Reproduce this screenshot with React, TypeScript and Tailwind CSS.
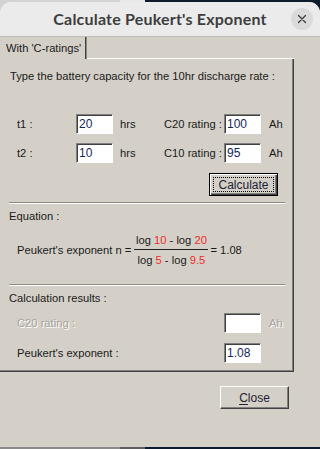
import React from 'react';

const font = { fontFamily: '"Liberation Sans", Arial, sans-serif' };

function Field({ value, disabled }: { value?: string; disabled?: boolean }) {
  return (
    <div className="w-[37px] h-[20px] shrink-0 bg-white border border-t-[#808080] border-l-[#808080] border-r-white border-b-white shadow-[inset_1px_1px_0_#404040] flex items-center pl-[2px] text-[12px] text-[#14285a]">
      {!disabled && value}
    </div>
  );
}

function Separator() {
  return <div className="ml-[9px] mr-[8px] h-[2px] border-t border-[#8c8a85] border-b border-b-white" />;
}

export default function App() {
  return (
    <div
      className="w-[320px] h-[449px] flex flex-col overflow-hidden whitespace-nowrap bg-[linear-gradient(to_right,#d3d3d3_120px,#e8e8e8_120px,#e8e8e8_145px,#0d1b2e_145px)]"
      style={font}
    >
      <div className="h-[2px] shrink-0" />
      <div className="flex-1 flex flex-col bg-[#d4d0c8] rounded-t-[11px] overflow-hidden">
        {/* title bar */}
        <div className="h-[35px] shrink-0 bg-[#ebebeb] border-b border-[#bdbdbd] grid grid-cols-[1fr_auto_1fr] items-center">
          <div />
          <div className="text-[16px] font-bold text-[#3d3d3d] tracking-[0.2px]" style={{ fontFamily: 'Lato, "Open Sans", sans-serif' }}>
            Calculate Peukert's Exponent
          </div>
          <div className="flex justify-end pr-[7px]">
            <div className="w-[22px] h-[22px] rounded-full bg-[#dadada] flex items-center justify-center">
              <svg width="10" height="10" viewBox="0 0 10 10">
                <path d="M1.5 1.5 L8.5 8.5 M8.5 1.5 L1.5 8.5" stroke="#3a3a3a" strokeWidth="1.3" strokeLinecap="round" />
              </svg>
            </div>
          </div>
        </div>

        {/* tab */}
        <div className="h-[22px] shrink-0 flex w-[294px]">
          <div className="w-[86px] pl-[6px] flex items-center text-[11.2px] text-[#1a1a1a] border-r border-[#404040] shadow-[1px_0_0_#8c8a85]">
            With 'C-ratings'
          </div>
          <div className="flex-1 border-b border-white ml-[1px]" />
        </div>

        {/* panel */}
        <div className="w-[294px] border-r border-b border-r-[#404040] border-b-[#404040] shadow-[inset_-1px_-1px_0_#808080] text-[11.2px] text-[#1a1a1a] pb-[8px]">
          <div className="pl-[10px] pt-[10px] h-[24px] leading-[14px]">Type the battery capacity for the 10hr discharge rate :</div>

          <div className="mt-[31px] flex items-center pl-[17px] h-[20px]">
            <span className="w-[59px]">t1 :</span>
            <Field value="20" />
            <span className="ml-[7px] w-[44px]">hrs</span>
            <span className="w-[60px]">C20 rating :</span>
            <Field value="100" />
            <span className="ml-[8px]">Ah</span>
          </div>
          <div className="mt-[9px] flex items-center pl-[17px] h-[20px]">
            <span className="w-[59px]">t2 :</span>
            <Field value="10" />
            <span className="ml-[7px] w-[44px]">hrs</span>
            <span className="w-[60px]">C10 rating :</span>
            <Field value="95" />
            <span className="ml-[8px]">Ah</span>
          </div>

          <div className="mt-[10px] flex pl-[209px]">
            <div className="w-[69px] h-[23px] border border-black bg-[#d4d0c8] shadow-[inset_1px_1px_0_#ffffff,inset_-1px_-1px_0_#404040,inset_-2px_-2px_0_#808080] p-[3px]">
              <div className="w-full h-full border border-dotted border-black flex items-center justify-center text-[12px] text-[#1c2233]">
                Calculate
              </div>
            </div>
          </div>

          <div className="mt-[6px]">
            <Separator />
          </div>

          <div className="pl-[9px] mt-[5px] leading-[14px] h-[14px]">Equation :</div>

          <div className="mt-[10px] flex items-center pl-[17px]">
            <span>Peukert's exponent n =</span>
            <div className="ml-[3px] flex flex-col items-center w-[74px]">
              <div className="leading-[14px] h-[14px]">
                log <span className="text-[#ee2b2b]">10</span> - log <span className="text-[#ee2b2b]">20</span>
              </div>
              <div className="mt-[2px] w-full h-[1px] bg-[#202020]" />
              <div className="mt-[3px] leading-[14px] h-[14px]">
                log <span className="text-[#ee2b2b]">5</span> - log <span className="text-[#ee2b2b]">9.5</span>
              </div>
            </div>
            <span className="ml-[2px]">= 1.08</span>
          </div>

          <div className="mt-[17px]">
            <Separator />
          </div>

          <div className="pl-[9px] mt-[5px] leading-[14px] h-[14px]">Calculation results :</div>

          <div className="mt-[8px] flex items-center pl-[17px] h-[20px]">
            <span className="w-[207px] text-[#a6a39c] [text-shadow:1px_1px_0_#ffffff]">C20 rating :</span>
            <Field disabled />
            <span className="ml-[8px] text-[#a6a39c] [text-shadow:1px_1px_0_#ffffff]">Ah</span>
          </div>
          <div className="mt-[10px] flex items-center pl-[17px] h-[20px]">
            <span className="w-[207px]">Peukert's exponent :</span>
            <Field value="1.08" />
          </div>
        </div>

        <div className="mt-[14px] pl-[220px]">
          <div className="w-[69px] h-[23px] bg-[#d4d0c8] border-t border-l border-t-white border-l-white border-r border-b border-r-[#404040] border-b-[#404040] shadow-[inset_-1px_-1px_0_#808080] flex items-center justify-center text-[12px] text-[#1c2233]">
            <span><span className="underline underline-offset-2">C</span>lose</span>
          </div>
        </div>
      </div>
      <div className="h-[2px] shrink-0 bg-[linear-gradient(to_right,#8a8a8a_120px,#5e5e5e_120px,#5e5e5e_145px,#0d1b2e_145px)]" />
    </div>
  );
}
